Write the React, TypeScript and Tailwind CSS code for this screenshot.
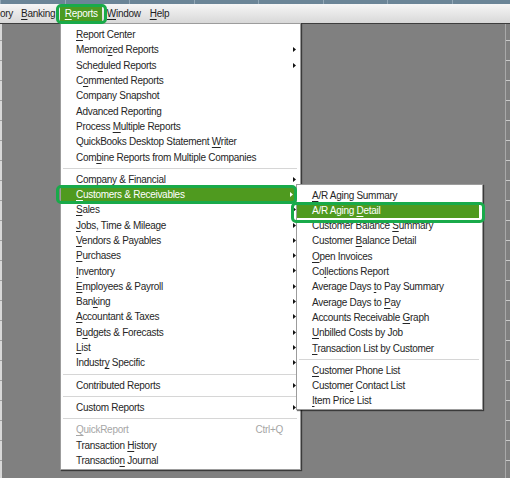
import React from 'react';

type Entry =
  | { kind: 'sep' }
  | { kind: 'item'; label: string; arrow?: boolean; disabled?: boolean; shortcut?: string; active?: boolean };

const sep: Entry = { kind: 'sep' };
const item = (label: string, opts: { arrow?: boolean; disabled?: boolean; shortcut?: string; active?: boolean } = {}): Entry => ({
  kind: 'item',
  label,
  ...opts,
});

// "_" marks the mnemonic letter that gets underlined
const reportsMenu: Entry[] = [
  item('_Report Center'),
  item('Memori_zed Reports', { arrow: true }),
  item('Sche_duled Reports', { arrow: true }),
  item('C_ommented Reports'),
  item('Company Snapshot'),
  item('Advanced Reporting'),
  item('Process _Multiple Reports'),
  item('QuickBooks Desktop Statement _Writer'),
  item('Com_bine Reports from Multiple Companies'),
  sep,
  item('Company & _Financial', { arrow: true }),
  item('_Customers & Receivables', { arrow: true, active: true }),
  item('_Sales', { arrow: true }),
  item('_Jobs, Time & Mileage', { arrow: true }),
  item('_Vendors & Payables', { arrow: true }),
  item('_Purchases', { arrow: true }),
  item('_Inventory', { arrow: true }),
  item('_Employees & Payroll', { arrow: true }),
  item('Ban_king', { arrow: true }),
  item('_Accountant & Taxes', { arrow: true }),
  item('B_udgets & Forecasts', { arrow: true }),
  item('_List', { arrow: true }),
  item('Industr_y Specific', { arrow: true }),
  sep,
  item('Contributed Reports', { arrow: true }),
  sep,
  item('Custom Reports', { arrow: true }),
  sep,
  item('_QuickReport', { disabled: true, shortcut: 'Ctrl+Q' }),
  item('Transaction _History'),
  item('Transactio_n Journal'),
];

const customersMenu: Entry[] = [
  item('_A/R Aging Summary'),
  item('A/R Aging _Detail', { active: true }),
  item('Customer Balance _Summary'),
  item('Customer _Balance Detail'),
  item('_Open Invoices'),
  item('Co_llections Report'),
  item('Average Days _to Pay Summary'),
  item('Average Days to _Pay'),
  item('Accounts Receivable _Graph'),
  item('_Unbilled Costs by Job'),
  item('_Transaction List by Customer'),
  sep,
  item('_Customer Phone List'),
  item('Custome_r Contact List'),
  item('_Item Price List'),
];

function Label({ text }: { text: string }) {
  const i = text.indexOf('_');
  if (i < 0) return <span className="whitespace-pre">{text}</span>;
  return (
    <span className="whitespace-pre">
      {text.slice(0, i)}
      <span className="underline decoration-1 underline-offset-[2px]">{text[i + 1]}</span>
      {text.slice(i + 2)}
    </span>
  );
}

function Arrow({ white }: { white?: boolean }) {
  return (
    <svg width="3" height="5" viewBox="0 0 3 5" className="absolute right-[4px] top-[5px]">
      <polygon points="0,0 3,2.5 0,5" fill={white ? '#ffffff' : '#111111'} />
    </svg>
  );
}

function Menu({ entries, pad }: { entries: Entry[]; pad: string }) {
  return (
    <>
      {entries.map((e, i) => {
        if (e.kind === 'sep') {
          return (
            <div key={i} className="h-[7px] flex items-center ml-[2px] mr-[3px]">
              <div className="h-px w-full bg-[#d6d6d6]" />
            </div>
          );
        }
        return (
          <div
            key={i}
            className={`relative h-[15.3px] flex items-center pt-[1px] ${pad} ${
              e.active ? 'bg-[#4f9a1f] text-white mr-[3px]' : e.disabled ? 'text-[#a6a6a6]' : 'text-[#262626]'
            }`}
          >
            <Label text={e.label} />
            {e.shortcut && <span className="absolute right-[17px] text-[#a6a6a6]">{e.shortcut}</span>}
            {e.arrow && <Arrow white={e.active} />}
          </div>
        );
      })}
    </>
  );
}

const menubar = [
  { label: 'ory', pad: 'pl-0 pr-[4px]' },
  { label: '_Banking', pad: 'pl-[4px] pr-[5px]' },
  { label: '_Reports', pad: 'px-[4.5px]', open: true },
  { label: '_Window', pad: 'px-[4.5px]' },
  { label: '_Help', pad: 'px-[4.5px]' },
];

export default function App() {
  return (
    <div
      className="relative w-[510px] h-[478px] overflow-hidden flex flex-col bg-[#808080] text-[10px] tracking-[-0.28px] leading-none select-none"
      style={{ fontFamily: '"Liberation Sans", Arial, sans-serif' }}
    >
      {/* title strip with column ticks */}
      <div className="h-[4px] bg-[#6b8597] flex">
        {Array.from({ length: 8 }).map((_, i) => (
          <div key={i} className="w-[64.5px] shrink-0 border-l border-[#93a8b7]" />
        ))}
      </div>

      {/* menu bar */}
      <div className="h-[20px] flex items-center border-b border-[#3d3d3d] bg-gradient-to-b from-[#f6f6f6] to-[#d8d8d8] text-[#1e1e1e]">
        {menubar.map((m) => (
          <span
            key={m.label}
            className={`h-[16px] flex items-center pt-[1px] ${m.pad} ${m.open ? 'bg-[#4c9a22] text-white' : ''}`}
          >
            <Label text={m.label} />
          </span>
        ))}
      </div>

      {/* workspace */}
      <div className="flex-1 flex">
        <div className="w-[2px] bg-[#d8d8d8] bg-[repeating-linear-gradient(to_bottom,transparent_0,transparent_16px,#a0a0a0_16px,#a0a0a0_17px,transparent_17px,transparent_20px)]" />
        <div className="flex-1 bg-[#808080]" />
        <div className="w-[5px] border-l border-[#a9a9a9] bg-[#808080] bg-[repeating-linear-gradient(to_bottom,transparent_0,transparent_16px,#c9c9c9_16px,#c9c9c9_17px,transparent_17px,transparent_20px)]" />
      </div>

      {/* Reports dropdown */}
      <div className="absolute left-[60px] top-[23px] w-[241px] h-[447px] bg-white border border-[#9c9c9c] pt-[3px] shadow-[1px_1px_1px_rgba(0,0,0,0.55)]">
        <Menu entries={reportsMenu} pad="pl-[15px]" />
      </div>

      {/* Customers & Receivables submenu */}
      <div className="absolute left-[296px] top-[184px] w-[187px] h-[226px] bg-white border border-[#9c9c9c] pt-[2.4px] shadow-[1px_1px_1px_rgba(0,0,0,0.55)]">
        <Menu entries={customersMenu} pad="pl-[15px]" />
      </div>

      {/* green callout outlines */}
      <div className="absolute left-[56px] top-[4px] w-[51px] h-[20px] rounded-[5px] border-[3px] border-[#19aa4a]" />
      <div className="absolute left-[56px] top-[185px] w-[241px] h-[18.5px] rounded-[5px] border-[3px] border-[#19aa4a]" />
      <div className="absolute left-[291px] top-[202px] w-[194px] h-[21px] rounded-[5px] border-[3px] border-[#19aa4a]" />
    </div>
  );
}
